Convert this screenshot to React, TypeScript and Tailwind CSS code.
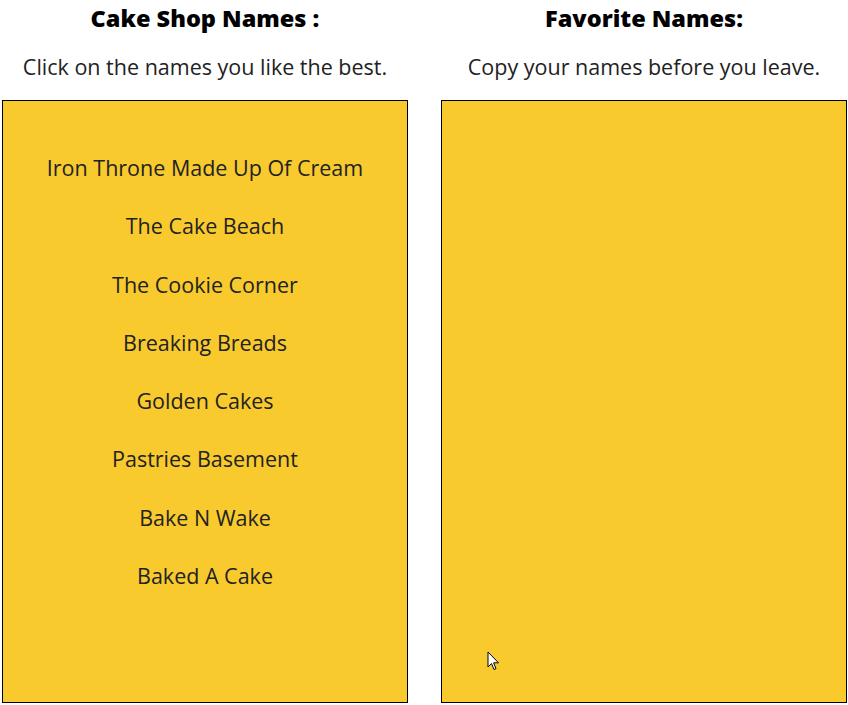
import React from "react";

const names = [
  "Iron Throne Made Up Of Cream",
  "The Cake Beach",
  "The Cookie Corner",
  "Breaking Breads",
  "Golden Cakes",
  "Pastries Basement",
  "Bake N Wake",
  "Baked A Cake",
];

const body = { fontFamily: "'Open Sans', sans-serif" };
const head = { fontFamily: "'Open Sans', sans-serif" };

export default function App() {
  return (
    <div className="relative w-[848px] h-[705px] bg-white flex gap-[33px] pl-[2px] overflow-hidden">
      <div className="w-[406px] flex flex-col items-center">
        <h1 className="h-[38px] pt-[3px] text-[23.5px] font-extrabold text-black leading-[30px]" style={head}>
          Cake Shop Names :
        </h1>
        <p className="mt-[15px] text-[21.5px] leading-[28px] text-[#222]" style={body}>
          Click on the names you like the best.
        </p>
        <div className="mt-[19px] w-[406px] h-[603px] bg-[#f8ca2e] border border-black flex flex-col items-center pt-[52px]">
          {names.map((n) => (
            <div key={n} className="h-[58.3px] flex items-start text-[21.5px] leading-[30px] text-[#222]" style={body}>
              {n}
            </div>
          ))}
        </div>
      </div>
      <div className="w-[406px] flex flex-col items-center">
        <h1 className="h-[38px] pt-[3px] text-[23.5px] font-extrabold text-black leading-[30px]" style={head}>
          Favorite Names:
        </h1>
        <p className="mt-[15px] text-[21.5px] leading-[28px] text-[#222]" style={body}>
          Copy your names before you leave.
        </p>
        <div className="mt-[19px] w-[406px] h-[603px] bg-[#f8ca2e] border border-black" />
      </div>
      <svg className="absolute left-[487px] top-[651px]" width="14" height="21" viewBox="0 0 14 21">
        <path d="M1 1 L1 16 L4.5 12.5 L7 18.5 L9 17.6 L6.6 11.8 L11.5 11.8 Z" fill="white" stroke="black" strokeWidth="1" strokeLinejoin="round" />
      </svg>
    </div>
  );
}
